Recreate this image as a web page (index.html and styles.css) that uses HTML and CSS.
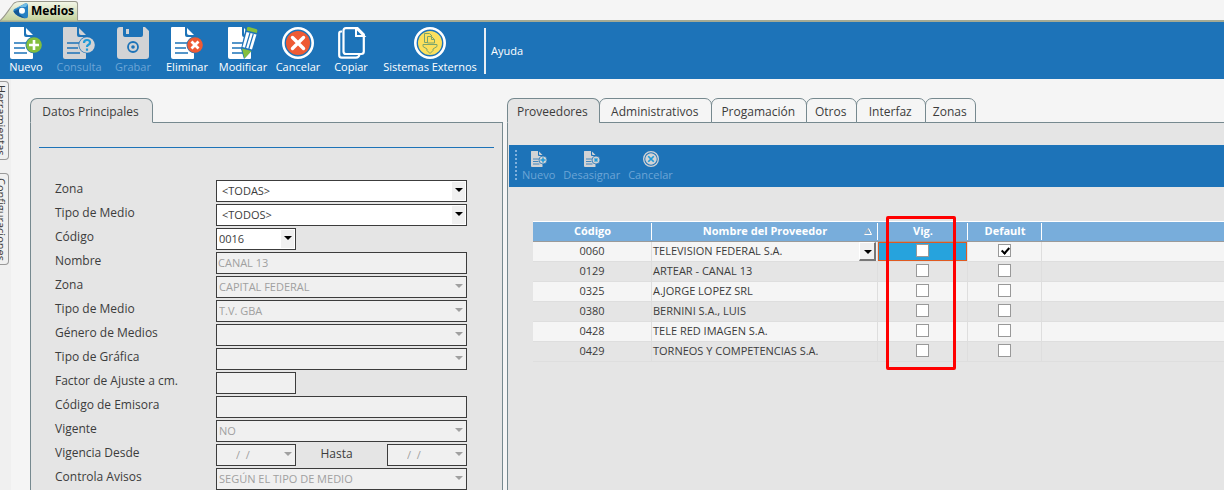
FILE: index.html
```html
<!DOCTYPE html>
<html lang="es">
<head>
<meta charset="utf-8">
<title>Medios</title>
<link rel="stylesheet" href="styles.css">
</head>
<body>
<svg class="defs" aria-hidden="true">
  <symbol id="doc" viewBox="0 0 32 32">
    <path d="M1 0h13v8q0 2 2 2h7v21q0 1-1 1H2q-2 0-2-2V1q0-1 1-1z" fill="currentColor"/>
    <path d="M16 1l7 7h-5q-2 0-2-2z" fill="currentColor"/>
    <path d="M4 16h13M4 21h11M4 26h13" stroke="#1d73b8" stroke-width="1.6"/>
  </symbol>
</svg>
<header class="window-bar">
  <div class="window-tab">
    <svg class="tab-shape" viewBox="0 0 78 21" preserveAspectRatio="none">
      <defs><linearGradient id="tabfill" x1="0" y1="0" x2="0" y2="1"><stop offset="0" stop-color="#f3f6e8"/><stop offset="1" stop-color="#c3d19d"/></linearGradient></defs>
      <path d="M0 20.500C5 17 10 7 14 3Q16 1.500 20 1.500H74Q76.500 1.500 76.500 4V20.500" fill="url(#tabfill)" stroke="#98988c"/>
    </svg>
    <svg class="logo" viewBox="0 0 16 16"><path d="M.5 8.500Q0 7 1.500 6L12 .5q3-1 3 2.500v10q0 3-3 2.200L5 13Q1.500 11 .5 8.500z" fill="#2581c4"/><path d="M1 6.500L12 .5q2-.5 2.600.5L13 4 7 4z" fill="#72bde5"/><path d="M.5 8.500L6 6v5l6 4.500Q4 14 .5 8.500z" fill="#145795"/><circle cx="9" cy="7.800" r="3" fill="#fff"/></svg>
    <span>Medios</span>
  </div>
</header>
<nav class="toolbar">
  <button class="tool tool-first"><svg viewBox="0 0 32 32"><use href="#doc" width="32" height="32"/><circle cx="24" cy="18" r="8.500" fill="#1d73b8"/><circle cx="24" cy="18" r="7.800" fill="#84bf3d"/><path d="M24 13v10M19 18h10" stroke="#fff" stroke-width="2.600"/></svg>Nuevo</button>
  <button class="tool" disabled><svg viewBox="0 0 32 32"><use href="#doc" width="32" height="32"/><circle cx="24" cy="18" r="8.500" fill="#1d73b8"/><circle cx="24" cy="18" r="7.800" fill="#d2d3d5"/><path d="M21 16q0-3 3-3t3 2.500q0 1.500-1.500 2.300T24 20M24 21.500v2.300" fill="none" stroke="#1f9ad8" stroke-width="2.200"/></svg>Consulta</button>
  <button class="tool" disabled><svg viewBox="0 0 32 32"><path d="M3 0h3v8q0 2 2 2h16q2 0 2-2V0h2l4 4v25q0 3-3 3H3q-3 0-3-3V3q0-3 3-3z" fill="currentColor"/><path d="M8 0h14v7q0 1-1 1H9q-1 0-1-1z" fill="#1d73b8"/><path d="M9 2h3v5H9z" fill="currentColor"/><circle cx="16" cy="20" r="5" fill="none" stroke="#1d73b8" stroke-width="1.800"/><circle cx="16" cy="20" r="1.800" fill="#1d73b8"/></svg>Grabar</button>
  <button class="tool"><svg viewBox="0 0 32 32"><use href="#doc" width="32" height="32"/><circle cx="24" cy="18" r="8.500" fill="#1d73b8"/><circle cx="24" cy="18" r="7.800" fill="#ee5a34"/><path d="M20.500 14.500l7 7M27.500 14.500l-7 7" stroke="#fff" stroke-width="2.800"/></svg>Eliminar</button>
  <button class="tool tool-mid"><svg viewBox="0 0 32 32"><use href="#doc" x="1" width="32" height="32"/><path d="M19 0h12l-3 20-11 12-3-10z" fill="#1d73b8"/><path d="M19.500 5l10 2.500-4.500 15-9.500-2.500z" fill="#fff"/><path d="M23 6l-4.500 15M26.300 7l-4.500 15" stroke="#1d73b8" stroke-width="1.200"/><path d="M20 1q.5-1.500 2-1l7 2q1.700.5 1.300 2l-.5 2-10-2.500z" fill="#84bf3d"/><path d="M15 21.500l9.500 2.500-7 7.500z" fill="#84bf3d"/></svg>Modificar</button>
  <button class="tool tool-narrow"><svg viewBox="0 0 32 32"><circle cx="16" cy="16" r="14.700" fill="none" stroke="#fff" stroke-width="2.600"/><circle cx="16" cy="16" r="12" fill="#ee5a34"/><path d="M10.500 10.500l11 11M21.500 10.500l-11 11" stroke="#fff" stroke-width="3.400" stroke-linecap="round"/></svg>Cancelar</button>
  <button class="tool"><svg viewBox="0 0 32 32"><path d="M7 4.500H6Q4.200 4.500 4.200 6.500V28q0 2.700 2.500 2.700H21q3 0 3.500-3.500" fill="none" stroke="#fff" stroke-width="2.200"/><path d="M11 1.200h11.500l6.300 6.300V24.500q0 2.500-2.500 2.500H11q-2.500 0-2.500-2.500V3.700q0-2.500 2.500-2.500z" fill="none" stroke="#fff" stroke-width="2.200"/><path d="M21 1v8h8z" fill="#1d73b8" stroke="#fff" stroke-width="2"/></svg>Copiar</button>
  <button class="tool tool-wide"><svg viewBox="0 0 32 32"><circle cx="16" cy="16" r="14.700" fill="none" stroke="#fff" stroke-width="2.600"/><circle cx="16" cy="16" r="12" fill="#fce05d"/><g fill="none" stroke="#7ba46c" stroke-width="1"><path d="M13.500 15.500h-3v-9h5l2.500 2.500M13.500 9.500h4l3 3v3.500h-7zM17.500 9.500v3h3M9 17.500h14v2l-4 2.500v1.500L16 26.500l-3-3V22l-4-2.500z"/></g></svg>Sistemas Externos</button>
  <span class="divider"></span>
  <a class="help" href="#ayuda">Ayuda</a>
</nav>
<div class="workspace">
  <aside class="side">
    <button class="side-tab side-a"><span>Herramientas</span></button>
    <button class="side-tab side-b"><span>Configuraciones</span></button>
  </aside>
  <main class="panels">
    <section class="panel panel-left">
      <div class="tabs"><button class="tab active tab-main">Datos Principales</button></div>
      <form class="body form-body">
        <div class="row"><label for="zona">Zona</label><div class="drop wide"><select id="zona"><option>&lt;TODAS&gt;</option></select></div></div>
        <div class="row"><label for="tipo">Tipo de Medio</label><div class="drop wide"><select id="tipo"><option>&lt;TODOS&gt;</option></select></div></div>
        <div class="row"><label for="cod">Código</label><div class="drop small"><select id="cod"><option>0016</option></select></div></div>
        <div class="row"><label for="nom">Nombre</label><input class="box" id="nom" value="CANAL 13" disabled></div>
        <div class="row"><label for="zona2">Zona</label><div class="drop"><select id="zona2" disabled><option>CAPITAL FEDERAL</option></select></div></div>
        <div class="row"><label for="tipo2">Tipo de Medio</label><div class="drop"><select id="tipo2" disabled><option>T.V. GBA</option></select></div></div>
        <div class="row"><label for="gen">Género de Medios</label><div class="drop"><select id="gen" disabled></select></div></div>
        <div class="row"><label for="graf">Tipo de Gráfica</label><div class="drop"><select id="graf" disabled></select></div></div>
        <div class="row"><label for="fac">Factor de Ajuste a cm.</label><input class="box small" id="fac" disabled></div>
        <div class="row"><label for="emi">Código de Emisora</label><input class="box" id="emi" disabled></div>
        <div class="row"><label for="vig">Vigente</label><div class="drop"><select id="vig" disabled><option>NO</option></select></div></div>
        <div class="row"><label for="desde">Vigencia Desde</label><div class="dates"><div class="drop small date"><select id="desde" disabled><option>/&nbsp; /</option></select></div><label for="hasta">Hasta</label><div class="drop small date"><select id="hasta" disabled><option>/&nbsp; /</option></select></div></div></div>
        <div class="row"><label for="ctrl">Controla Avisos</label><div class="drop"><select id="ctrl" disabled><option>SEGÚN EL TIPO DE MEDIO</option></select></div></div>
      </form>
    </section>
    <section class="panel panel-right">
      <div class="tabs"><button class="tab active">Proveedores</button><button class="tab tab-xl">Administrativos</button><button class="tab tab-l">Progamación</button><button class="tab tab-s">Otros</button><button class="tab tab-m">Interfaz</button><button class="tab tab-s">Zonas</button></div>
      <div class="body grid-body">
        <div class="subbar">
          <span class="grip"></span>
          <button class="mini" disabled><svg viewBox="0 0 32 32"><use href="#doc" width="32" height="32"/><circle cx="24" cy="18" r="8" fill="#d2d3d5" stroke="#1d73b8" stroke-width="1.500"/><path d="M24 13v10M19 18h10" stroke="#1f9ad8" stroke-width="3"/></svg>Nuevo</button>
          <button class="mini" disabled><svg viewBox="0 0 32 32"><use href="#doc" width="32" height="32"/><circle cx="24" cy="18" r="8" fill="#d2d3d5" stroke="#1d73b8" stroke-width="1.500"/><path d="M21 15l6 6M27 15l-6 6" stroke="#1f9ad8" stroke-width="3"/></svg>Desasignar</button>
          <button class="mini" disabled><svg viewBox="0 0 32 32"><circle cx="16" cy="16" r="14.700" fill="none" stroke="currentColor" stroke-width="2.600"/><circle cx="16" cy="16" r="11.500" fill="currentColor"/><path d="M10.500 10.500l11 11M21.500 10.500l-11 11" stroke="#1f9ad8" stroke-width="3.400"/></svg>Cancelar</button>
        </div>
        <div class="grid-wrap">
          <table>
            <colgroup><col class="c-code"><col class="c-name"><col class="c-vig"><col class="c-def"><col></colgroup>
            <thead><tr><th>Código</th><th class="sorted">Nombre del Proveedor<svg class="sort" viewBox="0 0 8 7"><path d="M4 .5L.5 6.500h7z" fill="none" stroke="#b5b5b5"/><path d="M4.500 .5l3 6h-7" fill="none" stroke="#fff"/></svg></th><th>Vig.</th><th>Default</th><th></th></tr></thead>
            <tbody>
              <tr><td>0060</td><td class="name">TELEVISION FEDERAL S.A.<button class="cell-drop" type="button" aria-label="Elegir proveedor"></button></td><td class="selected"><input type="checkbox" aria-label="Vig. 0060"></td><td><input type="checkbox" checked aria-label="Default 0060"></td><td></td></tr>
              <tr><td>0129</td><td class="name">ARTEAR - CANAL 13</td><td><input type="checkbox" aria-label="Vig. 0129"></td><td><input type="checkbox" aria-label="Default 0129"></td><td></td></tr>
              <tr><td>0325</td><td class="name">A.JORGE LOPEZ SRL</td><td><input type="checkbox" aria-label="Vig. 0325"></td><td><input type="checkbox" aria-label="Default 0325"></td><td></td></tr>
              <tr><td>0380</td><td class="name">BERNINI S.A., LUIS</td><td><input type="checkbox" aria-label="Vig. 0380"></td><td><input type="checkbox" aria-label="Default 0380"></td><td></td></tr>
              <tr><td>0428</td><td class="name">TELE RED IMAGEN S.A.</td><td><input type="checkbox" aria-label="Vig. 0428"></td><td><input type="checkbox" aria-label="Default 0428"></td><td></td></tr>
              <tr><td>0429</td><td class="name">TORNEOS Y COMPETENCIAS S.A.</td><td><input type="checkbox" aria-label="Vig. 0429"></td><td><input type="checkbox" aria-label="Default 0429"></td><td></td></tr>
            </tbody>
          </table>
          <div class="highlight"></div>
        </div>
      </div>
    </section>
  </main>
</div>
</body>
</html>
```

FILE: styles.css
```css
* { box-sizing: border-box; }
body { margin: 0; height: 100vh; overflow: hidden; display: flex; flex-direction: column; background: #f5f5f5; color: #3c3c3c; font: 12px/16px "Open Sans", "Noto Sans", sans-serif; }
button, input, select { font: inherit; color: inherit; margin: 0; }
button { border: 0; background: none; padding: 0; }
.defs { position: absolute; width: 0; height: 0; }

.window-bar { flex: none; height: 22px; border-bottom: 2px solid #a4aa94; display: flex; align-items: flex-end; }
.window-tab { position: relative; height: 21px; margin-bottom: -1px; padding: 0 5px 0 13px; display: flex; align-items: center; gap: 2px; font-weight: 700; color: #000; }
.tab-shape { position: absolute; inset: 0; width: 100%; height: 100%; }
.window-tab .logo { position: relative; width: 16px; height: 16px; }
.window-tab span { position: relative; }

.toolbar { flex: none; height: 57px; background: #1d73b8; color: #fff; display: flex; align-items: center; font: 11px/14px "Open Sans", sans-serif; white-space: nowrap; }
.tool { width: 54px; height: 47px; display: flex; flex-direction: column; align-items: center; gap: 1px; }
.tool svg { width: 32px; height: 32px; flex: none; color: #fff; }
.tool-first, .tool-narrow { width: 52px; }
.tool-mid { width: 58px; }
.tool-wide { width: 104px; }
.tool:disabled, .mini:disabled { color: #6ca5d6; }
.tool:disabled svg, .mini svg { color: #d2d3d5; }
.divider { width: 2px; height: 46px; margin: 0 5px 0 2px; background: #e8eef4; }
.help { color: #fff; text-decoration: none; }

.workspace { flex: 1; min-height: 0; display: flex; }
.side { flex: none; width: 11px; background: #f0f0f0; padding-top: 2px; display: flex; flex-direction: column; gap: 13px; }
.side-tab { width: 9px; border: 1px solid #999; border-left: 0; border-radius: 0 4px 4px 0; overflow: hidden; display: flex; justify-content: flex-end; align-items: center; font-size: 11px; line-height: 14px; }
.side-tab span { writing-mode: vertical-rl; }
.side-a { height: 79px; }
.side-b { height: 92px; }

.panels { flex: 1; min-width: 0; padding: 19px 0 0 19px; display: grid; grid-template-columns: 473fr 717fr; gap: 4px; }
.panel { min-width: 0; display: flex; flex-direction: column; }
.tabs { display: flex; height: 25px; margin-bottom: -1px; }
.tab { position: relative; height: 25px; padding: 2px 8px 0 7px; border: 1px solid #76898f; border-radius: 7px 7px 0 0; margin-right: -1px; background: #f5f5f5; white-space: nowrap; }
.tab.active { background: #e5e5e5; border-bottom-color: #e5e5e5; padding: 2px 11px 0 9px; }
.tab-main { width: 123px; }
.tab-xl { width: 113px; }
.tab-l { width: 96px; }
.tab-m { width: 70px; }
.tab-s { width: 51px; }
.body { flex: 1; border: 1px solid #76898f; border-bottom: 0; background: #e5e5e5; }

.form-body { padding: 57px 35px 0 24px; display: flex; flex-direction: column; gap: 2px; background: linear-gradient(#1d73b8, #1d73b8) 8px 24px / calc(100% - 16px) 1px no-repeat #e5e5e5; }
.row { display: grid; grid-template-columns: 161px 1fr; height: 22px; }
.row label { white-space: nowrap; line-height: 18px; }
.drop { position: relative; height: 22px; }
.drop select, .box { appearance: none; width: 100%; height: 22px; border: 1px solid #3c3c3c; border-radius: 0; background: #fff; padding: 0 16px 0 2px; font-size: 11px; opacity: 1; }
.drop.wide select { padding-left: 5px; }
.drop::before { content: ""; position: absolute; right: 2px; top: 2px; width: 13px; height: 18px; background: #f0f0f0; }
.drop::after { content: ""; position: absolute; right: 4px; top: 8px; border: 4px solid transparent; border-top-color: #000; border-bottom: 0; pointer-events: none; }
.drop select:disabled, .box:disabled { background: #f0f0f0; color: #a0a0a0; }
.drop:has(:disabled)::after { border-top-color: #a0a0a0; }
.box:disabled { padding: 0 2px 2px 1px; }
.row .small { width: 80px; }
.dates { display: flex; justify-content: space-between; align-items: flex-start; }
.dates label { padding-top: 1px; margin-right: 10px; }
.date select { padding-left: 19px; }

.panel-right .body { border-right: 0; }
.grid-body { padding: 22px 0 0 1px; }
.subbar { height: 42px; background: #1d73b8; padding: 5px 6px; display: flex; align-items: flex-start; font-size: 11px; }
.grip { width: 2px; height: 31px; margin-right: 5px; background: repeating-linear-gradient(#7fb0dc 0 2px, transparent 2px 4px); }
.mini { display: flex; flex-direction: column; align-items: center; line-height: 14px; margin-right: 8px; }
.mini svg { width: 16px; height: 16px; margin: 1px 0; }
.grid-wrap { position: relative; margin: 34px 0 0 24px; }
table { width: 100%; table-layout: fixed; border-spacing: 0; font-size: 11px; line-height: 14px; }
.c-code { width: 119px; }
.c-name { width: 226px; }
.c-vig { width: 90px; }
.c-def { width: 74px; }
th { height: 21px; padding: 0 0 1px; border-top: 1px solid #fff; border-bottom: 1px solid #9a9a9a; background: linear-gradient(#fff, #fff) right 1px / 1px 17px no-repeat #78addb; color: #fff; font-weight: 700; }
th:last-child { background: #78addb; }
.sorted { position: relative; }
.sort { position: absolute; right: 6px; top: 6px; width: 8px; height: 7px; }
td { height: 20px; padding: 0 0 2px; text-align: center; border-right: 1px solid #dedede; border-bottom: 1px solid #dedede; }
td:last-child { border-right: 0; }
tbody tr:nth-child(odd) { background: #f5f5f5; }
.name { position: relative; text-align: left; padding-left: 1px; white-space: nowrap; }
.cell-drop { position: absolute; right: 1px; top: 0; width: 17px; height: 19px; background: #f0f0f0; border: 1px solid #fff; border-right: 2px solid #777; border-bottom: 2px solid #777; }
.cell-drop::after { content: ""; position: absolute; left: 4px; top: 7px; border: 4px solid transparent; border-top-color: #000; border-bottom: 0; }
.selected { background: #26a3dd; box-shadow: inset 0 0 0 1px #e05a20; }
td input { appearance: none; display: block; width: 13px; height: 13px; margin: 0 auto; border: 1px solid #999; background: #fff; }
td input:checked { position: relative; }
td input:checked::after { content: ""; position: absolute; left: 4px; top: 1px; width: 3px; height: 6px; border: solid #000; border-width: 0 2px 2px 0; transform: rotate(42deg); }
.highlight { position: absolute; left: 353px; top: -5px; width: 70px; height: 154px; border: 3px solid #f00; border-radius: 2px; pointer-events: none; }
```
